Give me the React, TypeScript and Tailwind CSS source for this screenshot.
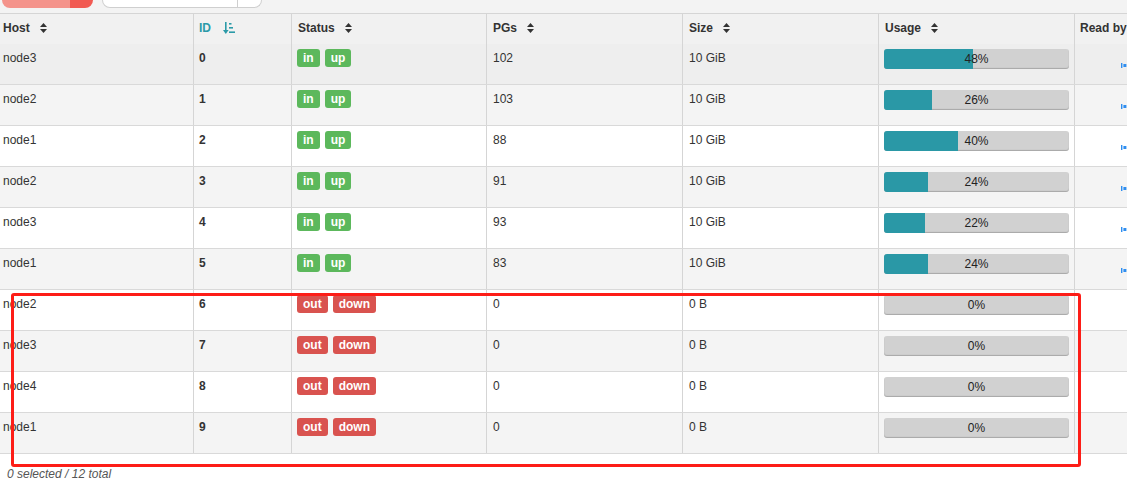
import React from 'react';

interface OsdRow {
  host: string;
  id: number;
  up: boolean;
  pgs: number;
  size: string;
  usage: number;
}

const rows: OsdRow[] = [
  { host: 'node3', id: 0, up: true, pgs: 102, size: '10 GiB', usage: 48 },
  { host: 'node2', id: 1, up: true, pgs: 103, size: '10 GiB', usage: 26 },
  { host: 'node1', id: 2, up: true, pgs: 88, size: '10 GiB', usage: 40 },
  { host: 'node2', id: 3, up: true, pgs: 91, size: '10 GiB', usage: 24 },
  { host: 'node3', id: 4, up: true, pgs: 93, size: '10 GiB', usage: 22 },
  { host: 'node1', id: 5, up: true, pgs: 83, size: '10 GiB', usage: 24 },
  { host: 'node2', id: 6, up: false, pgs: 0, size: '0 B', usage: 0 },
  { host: 'node3', id: 7, up: false, pgs: 0, size: '0 B', usage: 0 },
  { host: 'node4', id: 8, up: false, pgs: 0, size: '0 B', usage: 0 },
  { host: 'node1', id: 9, up: false, pgs: 0, size: '0 B', usage: 0 },
];

const SortIcon = () => (
  <svg width="7" height="10" viewBox="0 0 7 10" className="ml-[10px]">
    <path d="M3.5 0 L7 4 L0 4 Z" fill="#333" />
    <path d="M0 6 L7 6 L3.5 10 Z" fill="#333" />
  </svg>
);

const SortDownIcon = () => (
  <svg width="12" height="12" viewBox="0 0 12 12" className="ml-[12px]">
    <rect x="2" y="0" width="1.6" height="9" fill="#2b9aa8" />
    <path d="M0 8 L5.6 8 L2.8 12 Z" fill="#2b9aa8" />
    <rect x="6" y="1" width="2.5" height="1.6" fill="#2b9aa8" />
    <rect x="6" y="5" width="4" height="1.6" fill="#2b9aa8" />
    <rect x="6" y="9.4" width="6" height="1.6" fill="#2b9aa8" />
  </svg>
);

const cols = 'grid grid-cols-[194px_98px_195px_196px_196px_196px_60px]';
const cell = 'border-r border-[#d5d5d5] pl-[5px]';

function Badge({ label, ok }: { label: string; ok: boolean }) {
  return (
    <span
      className={`h-[18px] px-[6px] rounded-[3px] text-white font-bold leading-[18px] ${
        ok ? 'bg-[#5cb85c]' : 'bg-[#d9534f]'
      }`}
    >
      {label}
    </span>
  );
}

function Usage({ value }: { value: number }) {
  return (
    <div className="relative h-[20px] w-full rounded-[3px] bg-[#d1d1d1] overflow-hidden shadow-[inset_0_-1px_1px_rgba(0,0,0,0.2)]">
      <div className="absolute left-0 top-0 h-full bg-[#2a98a6]" style={{ width: `${value}%` }} />
      <div className="relative text-center leading-[20px] text-[#222]">{value}%</div>
    </div>
  );
}

export default function App() {
  return (
    <div className="relative w-[1127px] h-[484px] overflow-hidden bg-white font-['Liberation_Sans',Arial,sans-serif] text-[12px] text-[#333]">
      {/* toolbar remnants */}
      <div className="h-[13px] bg-[#f3f3f3] flex items-start">
        <div className="ml-[2px] w-[91px] h-[8px] rounded-b-[8px] overflow-hidden flex">
          <div className="w-[68px] bg-[#f4938b]" />
          <div className="flex-1 bg-[#f15a52]" />
        </div>
        <div className="ml-[9px] w-[160px] h-[8px] rounded-b-[8px] bg-white border border-t-0 border-[#cfcfcf] flex">
          <div className="w-[135px] border-r border-[#cfcfcf]" />
        </div>
      </div>

      {/* header */}
      <div className={`${cols} border-t border-[#d5d5d5] h-[31px] bg-[#f1f1f1] font-bold`}>
        <div className="border-r border-[#d5d5d5] pl-[3px] pt-[7px] flex items-start">
          <span className="leading-[14px]">Host</span>
          <span className="mt-[2px]"><SortIcon /></span>
        </div>
        <div className={`${cell} pt-[7px] flex items-start text-[#2b9aa8]`}>
          <span className="leading-[14px]">ID</span>
          <span className="mt-[1px]"><SortDownIcon /></span>
        </div>
        {['Status', 'PGs', 'Size', 'Usage'].map((h) => (
          <div key={h} className={`${cell} pt-[7px] flex items-start`}>
            <span className="leading-[14px] pl-[1px]">{h}</span>
            <span className="mt-[2px]"><SortIcon /></span>
          </div>
        ))}
        <div className="pl-[5px] pt-[7px] leading-[14px] whitespace-nowrap">Read by</div>
      </div>

      {/* body */}
      {rows.map((r, i) => {
        const bg = i === 0 ? 'bg-[#eeeeee]' : i % 2 === 1 ? 'bg-[#f4f4f4]' : 'bg-white';
        return (
          <div key={r.id} className={`${cols} ${bg} h-[41px] border-b border-[#d9d9d9]`}>
            <div className="border-r border-[#d5d5d5] pl-[3px] pt-[5px] leading-[18px]">{r.host}</div>
            <div className={`${cell} pt-[5px] leading-[18px] font-bold`}>{r.id}</div>
            <div className={`${cell} pt-[5px] flex items-start gap-[5px]`}>
              <Badge label={r.up ? 'in' : 'out'} ok={r.up} />
              <Badge label={r.up ? 'up' : 'down'} ok={r.up} />
            </div>
            <div className={`${cell} pt-[5px] leading-[18px] pl-[6px]`}>{r.pgs}</div>
            <div className={`${cell} pt-[5px] leading-[18px] pl-[6px]`}>{r.size}</div>
            <div className={`${cell} pt-[5px] pr-[5px]`}>
              <Usage value={r.usage} />
            </div>
            <div className="pl-[46px] pt-[19px]">
              {r.up && (
                <svg width="6" height="5" viewBox="0 0 6 5">
                  <rect x="0" y="0" width="1.4" height="5" fill="#2f8ef0" />
                  <rect x="2.4" y="1" width="3" height="3" fill="#2f8ef0" />
                </svg>
              )}
            </div>
          </div>
        );
      })}

      {/* footer */}
      <div className="pl-[7px] pt-[13px] leading-[14px] italic text-[#555]">0 selected / 12 total</div>

      {/* annotation */}
      <div className="absolute left-[11px] top-[293px] w-[1070px] h-[174px] border-[3px] border-[#fd1d17] rounded-[3px] pointer-events-none" />
    </div>
  );
}
